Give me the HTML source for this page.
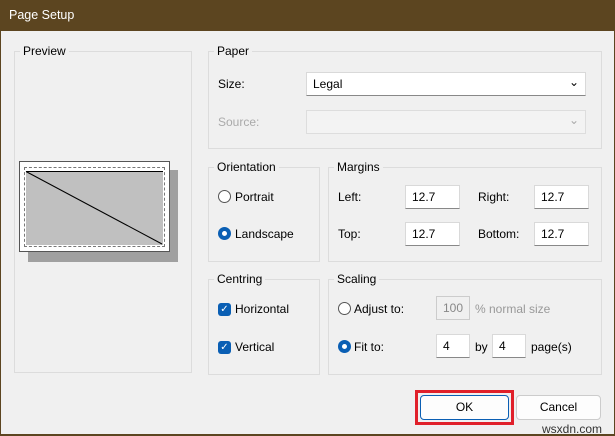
<!DOCTYPE html><html><head><style>
*{box-sizing:border-box}body{margin:0;width:615px;height:435px;overflow:hidden;background:#5c4520;font-family:"Liberation Sans",sans-serif;font-size:12px;color:#000}
#w{position:absolute;left:1px;top:31px;width:613px;height:403px;background:#f0f0f0}
.t{position:absolute;left:9px;top:8px;color:#fff;font-size:12.5px}
.g{position:absolute;border:1px solid #dcdcdc}
.l{position:absolute;background:#f0f0f0;padding:0 3px}
.a{position:absolute}
.in{position:absolute;background:#fff;border:1px solid #d9d9d9;border-bottom:1px solid #888;padding:4px 6px;height:24px}
.rb{position:absolute;width:13px;height:13px;border-radius:50%;border:1px solid #555;background:#fff}
.rb.on{border:4px solid #0a5fb4}
.cb{position:absolute;width:13px;height:13px;border-radius:3px;background:#0a5fb4;color:#fff;font-size:10px;line-height:13px;text-align:center}
.btn{position:absolute;border:1px solid #ccc;border-radius:4px;background:#fdfdfd;text-align:center;line-height:22px}
</style></head><body>
<div class="t">Page Setup</div>
<div id="w">
<div class="g" style="left:13px;top:20px;width:178px;height:322px"></div><div class="l" style="left:19px;top:13px">Preview</div>
<div class="a" style="left:27px;top:139px;width:150px;height:92px;background:#a0a0a0"></div>
<div class="a" style="left:18px;top:130px;width:151px;height:91px;background:#fff;border:1px solid #555"></div>
<div class="a" style="left:25px;top:140px;width:137px;height:74px;background:#c0c0c0"></div>
<div class="a" style="left:23px;top:136px;width:141px;height:80px;border:1px dashed #777"></div>
<svg class="a" style="left:0;top:0" width="200" height="240"><line x1="25" y1="140.5" x2="161" y2="213" stroke="#000"/><line x1="25" y1="140.5" x2="162" y2="140.5" stroke="#000"/></svg>

<div class="g" style="left:207px;top:20px;width:394px;height:98px"></div><div class="l" style="left:213px;top:13px">Paper</div>
<div class="a" style="left:217px;top:46px">Size:</div>
<div class="in" style="left:305px;top:41px;width:280px">Legal<span style="position:absolute;right:6px;top:2px">&#8964;</span></div>
<div class="a" style="left:217px;top:84px;color:#aaa">Source:</div>
<div class="in" style="left:305px;top:79px;width:280px;background:#f3f3f3;border-color:#ddd"><span style="position:absolute;right:6px;top:2px;color:#aaa">&#8964;</span></div>

<div class="g" style="left:207px;top:136px;width:112px;height:95px"></div><div class="l" style="left:213px;top:129px">Orientation</div>
<div class="rb" style="left:217px;top:159px"></div><div class="a" style="left:234px;top:159px">Portrait</div>
<div class="rb on" style="left:217px;top:196px"></div><div class="a" style="left:234px;top:196px">Landscape</div>

<div class="g" style="left:327px;top:136px;width:274px;height:95px"></div><div class="l" style="left:333px;top:129px">Margins</div>
<div class="a" style="left:337px;top:159px">Left:</div><div class="in" style="left:404px;top:154px;width:55px">12.7</div>
<div class="a" style="left:477px;top:159px">Right:</div><div class="in" style="left:533px;top:154px;width:55px">12.7</div>
<div class="a" style="left:337px;top:196px">Top:</div><div class="in" style="left:404px;top:191px;width:55px">12.7</div>
<div class="a" style="left:477px;top:196px">Bottom:</div><div class="in" style="left:533px;top:191px;width:55px">12.7</div>

<div class="g" style="left:207px;top:248px;width:112px;height:96px"></div><div class="l" style="left:213px;top:241px">Centring</div>
<div class="cb" style="left:217px;top:272px">&#10003;</div><div class="a" style="left:234px;top:271px">Horizontal</div>
<div class="cb" style="left:217px;top:310px">&#10003;</div><div class="a" style="left:234px;top:309px">Vertical</div>

<div class="g" style="left:327px;top:248px;width:274px;height:96px"></div><div class="l" style="left:333px;top:241px">Scaling</div>
<div class="rb" style="left:337px;top:271px"></div><div class="a" style="left:353px;top:271px">Adjust to:</div>
<div class="in" style="left:435px;top:265px;width:34px;background:#f0f0f0;border-color:#ccc;color:#888">100</div><div class="a" style="left:474px;top:271px;color:#999">% normal size</div>
<div class="rb on" style="left:337px;top:309px"></div><div class="a" style="left:353px;top:309px">Fit to:</div>
<div class="in" style="left:435px;top:303px;width:34px">4</div><div class="a" style="left:474px;top:309px">by</div>
<div class="in" style="left:491px;top:303px;width:34px">4</div><div class="a" style="left:530px;top:309px">page(s)</div>

<div class="a" style="left:414px;top:359px;width:99px;height:35px;border:3px solid #e0202a"></div>
<div class="btn" style="left:419px;top:364px;width:89px;height:25px;border-color:#0a5fb4">OK</div>
<div class="btn" style="left:515px;top:364px;width:85px;height:25px">Cancel</div>
<div class="a" style="left:541px;top:391px;font-size:12px;color:#333">wsxdn.com</div>
</div>
</body></html>
